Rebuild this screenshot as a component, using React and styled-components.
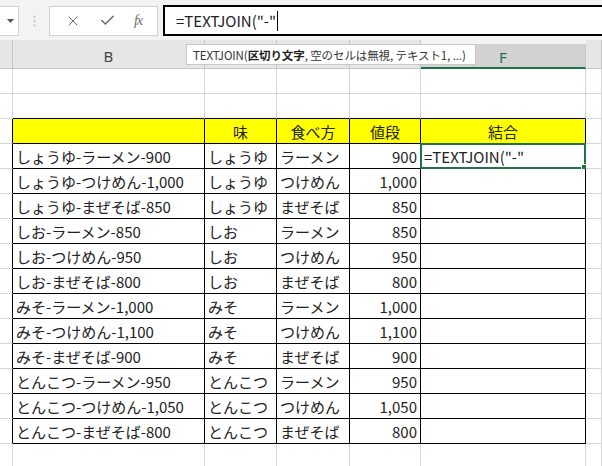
import React from 'react';
import styled, { createGlobalStyle } from 'styled-components';
import { X, Check } from 'lucide-react';

const GlobalStyle = createGlobalStyle`
  html, body {
    margin: 0;
    padding: 0;
    background: #fff;
  }
  body {
    width: 602px;
    height: 466px;
    overflow: hidden;
    font-family: "Noto Sans CJK JP", "Noto Sans", sans-serif;
  }
`;

const GRID = '#d6d6d6';
const INK = '#000';
const GREEN = '#217346';

// C..E labels sit under the function tip, so only B and F are printed
const COLS = [
  { key: 'A', width: 13, label: '' },
  { key: 'B', width: 192, label: 'B' },
  { key: 'C', width: 72, label: '' },
  { key: 'D', width: 73, label: '' },
  { key: 'E', width: 71, label: '' },
  { key: 'F', width: 165, label: 'F' },
  { key: 'G', width: 0, label: '' },
];

const menu = [
  ['しょうゆ', 'ラーメン', 900],
  ['しょうゆ', 'つけめん', 1000],
  ['しょうゆ', 'まぜそば', 850],
  ['しお', 'ラーメン', 850],
  ['しお', 'つけめん', 950],
  ['しお', 'まぜそば', 800],
  ['みそ', 'ラーメン', 1000],
  ['みそ', 'つけめん', 1100],
  ['みそ', 'まぜそば', 900],
  ['とんこつ', 'ラーメン', 950],
  ['とんこつ', 'つけめん', 1050],
  ['とんこつ', 'まぜそば', 800],
];

const yen = n => n.toLocaleString('en-US');
const FORMULA = '=TEXTJOIN("-"';

const FormulaBar = () =>
  <Toolbar>
    <NameBox>
      <svg width="7" height="4" viewBox="0 0 7 4"><path d="M0 0h7L3.5 4z" fill="#555" /></svg>
    </NameBox>
    <Grip>
      <svg width="3" height="12" viewBox="0 0 3 12">
        <circle cx="1.5" cy="1.5" r="1" fill="#bbb" />
        <circle cx="1.5" cy="6" r="1" fill="#bbb" />
        <circle cx="1.5" cy="10.5" r="1" fill="#bbb" />
      </svg>
    </Grip>
    <ActionBox>
      <X size={16} strokeWidth={1.5} color="#6a6a6a" />
      <Check size={17} strokeWidth={2.2} color="#6a6a6a" />
      <Fx>fx</Fx>
    </ActionBox>
    <FormulaInput>
      {FORMULA}
      <Caret />
    </FormulaInput>
  </Toolbar>;

const ColumnHeaders = () =>
  <HeaderRow>
    {COLS.map(c =>
      <HeaderCell key={c.key} $w={c.width} $active={c.key === 'F'}>
        {c.label}
      </HeaderCell>
    )}
    <Tip>
      TEXTJOIN(<b>区切り文字</b>, 空のセルは無視, テキスト1, ...)
    </Tip>
  </HeaderRow>;

// row of the sheet; `cells` maps B..F, `framed` draws the table border
const SheetRow = ({ cells = [], framed, above }) => {
  const [b, c, d, e, f] = cells;
  const line = framed ? INK : GRID;
  const under = framed || above ? INK : GRID;
  return (
    <Row>
      <Cell $w={13} $r={framed ? INK : GRID} $b={GRID} />
      <Cell $w={192} $r={line} $b={under} $fill={b?.fill}>{b?.text}</Cell>
      <Cell $w={72} $r={line} $b={under} $fill={c?.fill} $align={c?.align}>{c?.text}</Cell>
      <Cell $w={73} $r={line} $b={under} $fill={d?.fill} $align={d?.align}>{d?.text}</Cell>
      <Cell $w={71} $r={line} $b={under} $fill={e?.fill} $align={e?.align}>{e?.text}</Cell>
      <Cell $w={165} $r={line} $b={under} $fill={f?.fill} $align={f?.align}>
        {f?.text}
        {f?.selected && <Selection><Handle /></Selection>}
      </Cell>
      <Cell $grow $r={GRID} $b={GRID} />
    </Row>
  );
};

const head = text => ({ text, fill: '#ffff00', align: 'center' });

const App = () =>
  <>
    <GlobalStyle />
    <Window>
      <FormulaBar />
      <ColumnHeaders />
      <SheetRow />
      <SheetRow above />
      <SheetRow framed cells={[head(''), head('味'), head('食べ方'), head('値段'), head('結合')]} />
      {menu.map(([flavor, style, price], i) =>
        <SheetRow
          key={i}
          framed
          cells={[
            { text: `${flavor}-${style}-${yen(price)}` },
            { text: flavor },
            { text: style },
            { text: yen(price), align: 'flex-end' },
            i === 0 ? { text: FORMULA, selected: true } : {},
          ]}
        />
      )}
      <SheetRow />
    </Window>
  </>;

const Window = styled.div`
  width: 602px;
  height: 466px;
  overflow: hidden;
  background: #fff;
`;

const Toolbar = styled.div`
  display: flex;
  align-items: center;
  height: 40px;
  padding-top: 1px;
  box-sizing: border-box;
  background: #f3f3f3;
`;

const NameBox = styled.div`
  box-sizing: border-box;
  width: 19px;
  height: 30px;
  display: flex;
  align-items: center;
  justify-content: center;
  padding-left: 3px;
  background: #fff;
  border: 1px solid #d0d0d0;
  border-left: 0;
`;

const Grip = styled.div`
  width: 30px;
  display: flex;
  justify-content: center;
`;

const ActionBox = styled.div`
  box-sizing: border-box;
  width: 109px;
  height: 30px;
  display: flex;
  align-items: center;
  justify-content: space-around;
  padding: 0 6px;
  background: #fff;
  border: 1px solid #d0d0d0;
`;

const Fx = styled.span`
  font-family: "Liberation Serif", serif;
  font-style: italic;
  font-size: 14px;
  color: #6a6a6a;
  letter-spacing: -1px;
`;

const FormulaInput = styled.div`
  flex: 1;
  box-sizing: border-box;
  height: 31px;
  margin-left: 5px;
  display: flex;
  align-items: center;
  padding-left: 11px;
  background: #fff;
  border: 2px solid #000;
  border-right: 0;
  font-size: 15px;
  color: #222;
`;

const Caret = styled.span`
  width: 1px;
  height: 20px;
  margin-left: 1px;
  background: #000;
`;

const HeaderRow = styled.div`
  position: relative;
  display: flex;
  height: 29px;
  background: #f3f3f3;
`;

const HeaderCell = styled.div`
  box-sizing: border-box;
  flex: ${p => (p.$w ? `0 0 ${p.$w}px` : '1')};
  display: flex;
  align-items: center;
  justify-content: center;
  padding-top: 3px;
  font-family: "Noto Sans", sans-serif;
  font-size: 15px;
  color: ${p => (p.$active ? GREEN : '#444')};
  background: ${p => (p.$active ? '#d2d2d2' : '#e6e6e6')};
  margin-top: ${p => (p.$active ? '4px' : '0')};
  border-right: 1px solid #c6c6c6;
  border-bottom: ${p => (p.$active ? `2px solid ${GREEN}` : '1px solid #c6c6c6')};
`;

const Tip = styled.div`
  position: absolute;
  left: 186px;
  top: 4px;
  box-sizing: border-box;
  width: 290px;
  height: 21px;
  display: flex;
  align-items: center;
  padding-left: 6px;
  background: #fff;
  border: 1px solid #c8c8c8;
  font-size: 11.5px;
  letter-spacing: -0.1px;
  color: #333;
  white-space: nowrap;
  overflow: hidden;

  b {
    font-weight: 700;
    color: #222;
  }
`;

const Row = styled.div`
  display: flex;
  height: 25px;
`;

const Cell = styled.div`
  position: relative;
  box-sizing: border-box;
  flex: ${p => (p.$grow ? '1' : `0 0 ${p.$w}px`)};
  display: flex;
  align-items: center;
  justify-content: ${p => p.$align || 'flex-start'};
  padding: 1px 3px 0 3px;
  background: ${p => p.$fill || '#fff'};
  border-right: 1px solid ${p => p.$r};
  border-bottom: 1px solid ${p => p.$b};
  font-size: 15px;
  color: #222;
  white-space: nowrap;
  overflow: visible;
`;

const Selection = styled.div`
  position: absolute;
  left: -1px;
  top: -1px;
  right: -1px;
  bottom: -1px;
  border: 2px solid ${GREEN};
  pointer-events: none;
`;

const Handle = styled.div`
  position: absolute;
  right: -4px;
  bottom: -4px;
  width: 5px;
  height: 5px;
  background: ${GREEN};
  border: 1px solid #fff;
`;

export default App;
